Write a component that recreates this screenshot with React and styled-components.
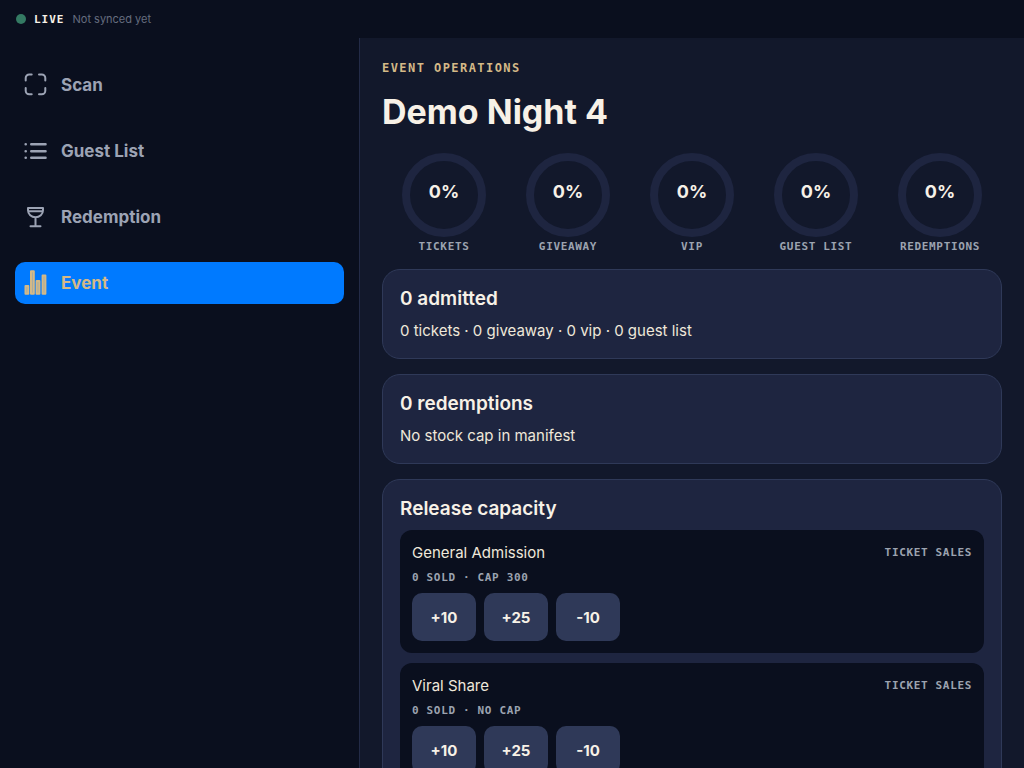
import styled, { createGlobalStyle } from "styled-components";

const rings = ["Tickets", "Giveaway", "VIP", "Guest list", "Redemptions"];

const releases = [
  { name: "General Admission", status: "0 sold · cap 300", kind: "Ticket sales" },
  { name: "Viral Share", status: "0 sold · no cap", kind: "Ticket sales" },
];

const steps = ["+10", "+25", "-10"];

function ScanIcon() {
  return (
    <NavIcon viewBox="0 0 24 24" aria-hidden="true">
      <path d="M1.700 7.500V5a3.500 3.500 0 0 1 3.500-3.500h2.500M15 1.500h2.800a3.500 3.500 0 0 1 3.500 3.500v2.500M21.300 15v2.800a3.500 3.500 0 0 1-3.500 3.500h-2.800M7.700 21.300H5.200a3.500 3.500 0 0 1-3.500-3.500V15" />
    </NavIcon>
  );
}

function ListIcon() {
  return (
    <NavIcon viewBox="0 0 24 24" aria-hidden="true">
      <path d="M7.200 5.200h14.400M7.200 12.200h14.400M7.200 18.800h14.400" strokeWidth="2.4" />
      <path d="M1.700 5.200h.01M1.700 12.200h.01M1.700 18.800h.01" strokeWidth="2.6" />
    </NavIcon>
  );
}

function GlassIcon() {
  return (
    <NavIcon viewBox="0 0 24 24" aria-hidden="true">
      <path d="M4 3h15v2.300a7.500 7 0 0 1-15 0zM4.200 6.200h14.600M11.500 12.300v8.700M6.500 21.300h10" />
    </NavIcon>
  );
}

function BarsIcon() {
  return (
    <NavIcon viewBox="0 0 24 24" aria-hidden="true">
      <path
        d="M1.500 15h2.800v7.800H1.500zM7 0.200h2.800v22.600H7zM12.600 10h2.800v12.800h-2.800zM18.600 4.400h2.800v18.400h-2.800z"
        fill="currentColor"
        fillOpacity=".75"
      />
    </NavIcon>
  );
}

const navItems = [
  { label: "Scan", Icon: ScanIcon },
  { label: "Guest List", Icon: ListIcon },
  { label: "Redemption", Icon: GlassIcon },
  { label: "Event", Icon: BarsIcon },
];

function App() {
  return (
    <>
      <GlobalStyle />
      <Shell>
        <StatusBar>
          <StatusDot />
          <StatusLabel>Live</StatusLabel>
          <SyncText>Not synced yet</SyncText>
        </StatusBar>
        <Body>
          <Sidebar>
            {navItems.map(({ label, Icon }) => (
              <NavLink
                key={label}
                href="#"
                $active={label === "Event"}
                aria-current={label === "Event" ? "page" : undefined}
              >
                <Icon />
                {label}
              </NavLink>
            ))}
          </Sidebar>
          <Main>
            <Eyebrow>Event operations</Eyebrow>
            <PageTitle>Demo Night 4</PageTitle>
            <Rings>
              {rings.map((label) => (
                <RingItem key={label}>
                  <Ring>0%</Ring>
                  <MonoLabel>{label}</MonoLabel>
                </RingItem>
              ))}
            </Rings>
            <Card>
              <CardTitle>0 admitted</CardTitle>
              <CardText>0 tickets · 0 giveaway · 0 vip · 0 guest list</CardText>
            </Card>
            <Card>
              <CardTitle>0 redemptions</CardTitle>
              <CardText>No stock cap in manifest</CardText>
            </Card>
            <Card>
              <CardTitle>Release capacity</CardTitle>
              <ReleaseList>
                {releases.map((release) => (
                  <Release key={release.name}>
                    <ReleaseHeader>
                      <ReleaseName>{release.name}</ReleaseName>
                      <MonoLabel>{release.kind}</MonoLabel>
                    </ReleaseHeader>
                    <MonoLabel>{release.status}</MonoLabel>
                    <Steps>
                      {steps.map((step) => (
                        <StepButton key={step} type="button">
                          {step}
                        </StepButton>
                      ))}
                    </Steps>
                  </Release>
                ))}
              </ReleaseList>
            </Card>
          </Main>
        </Body>
      </Shell>
    </>
  );
}

const GlobalStyle = createGlobalStyle`
  * {
    box-sizing: border-box;
  }

  body {
    margin: 0;
    background: #0a0f1e;
    color: #f7f1e7;
    font-family: Inter, "Liberation Sans", sans-serif;
  }

  h1, h2, p {
    margin: 0;
  }
`;

const Shell = styled.div`
  display: flex;
  flex-direction: column;
  height: 100vh;
`;

const StatusBar = styled.header`
  display: flex;
  align-items: center;
  gap: 8px;
  height: 38px;
  flex-shrink: 0;
  padding: 0 16px;
`;

const StatusDot = styled.span`
  width: 10px;
  height: 10px;
  border-radius: 50%;
  background: #347a63;
`;

const StatusLabel = styled.span`
  font-family: "DejaVu Sans Mono", monospace;
  font-size: 11px;
  font-weight: 700;
  letter-spacing: 1px;
  text-transform: uppercase;
`;

const SyncText = styled.span`
  font-size: 11px;
  color: #666d7e;
`;

const Body = styled.div`
  display: grid;
  grid-template-columns: 360px 1fr;
  flex: 1;
  min-height: 0;
`;

const Sidebar = styled.nav`
  display: flex;
  flex-direction: column;
  gap: 24px;
  padding: 26px 15px;
  border-right: 1px solid #232b47;
`;

const NavLink = styled.a`
  display: flex;
  align-items: center;
  gap: 13px;
  height: 42px;
  padding: 0 9px;
  border-radius: 10px;
  font-size: 17px;
  font-weight: 700;
  text-decoration: none;
  color: ${({ $active }) => ($active ? "#d4b987" : "#9ca3b4")};
  background: ${({ $active }) => ($active ? "#007aff" : "transparent")};
`;

const NavIcon = styled.svg`
  width: 24px;
  height: 24px;
  overflow: visible;
  fill: none;
  stroke: currentColor;
  stroke-width: 2;
  stroke-linecap: round;
  stroke-linejoin: round;
`;

const Main = styled.main`
  display: flex;
  flex-direction: column;
  gap: 15px;
  padding: 22px;
  background: #12182b;
  overflow-y: auto;
  scrollbar-width: none;

  > * {
    flex-shrink: 0;
  }
`;

const Eyebrow = styled.p`
  font-family: "DejaVu Sans Mono", monospace;
  font-size: 12px;
  font-weight: 700;
  line-height: 16px;
  letter-spacing: 0.12em;
  text-transform: uppercase;
  color: #d4b987;
`;

const PageTitle = styled.h1`
  margin-bottom: 5px;
  font-size: 34px;
  font-weight: 700;
  line-height: 42px;
`;

const Rings = styled.div`
  display: grid;
  grid-template-columns: repeat(5, 1fr);
`;

const RingItem = styled.div`
  display: flex;
  flex-direction: column;
  align-items: center;
  gap: 3px;
`;

const Ring = styled.div`
  display: flex;
  align-items: center;
  justify-content: center;
  width: 84px;
  height: 84px;
  padding-bottom: 8px;
  border: 8px solid #1e2540;
  border-radius: 50%;
  font-size: 18px;
  font-weight: 700;
`;

const MonoLabel = styled.span`
  font-family: "DejaVu Sans Mono", monospace;
  font-size: 11px;
  font-weight: 700;
  line-height: 14px;
  letter-spacing: 0.06em;
  text-transform: uppercase;
  color: #9ca3b0;
`;

const Card = styled.section`
  padding: 17px;
  border: 1px solid #2f3958;
  border-radius: 18px;
  background: #1e2540;
`;

const CardTitle = styled.h2`
  font-size: 19px;
  font-weight: 600;
  line-height: 23px;
`;

const CardText = styled.p`
  margin-top: 10px;
  font-size: 15px;
  line-height: 21px;
  color: #efe8da;
`;

const ReleaseList = styled.div`
  display: flex;
  flex-direction: column;
  gap: 10px;
  margin-top: 10px;
`;

const Release = styled.article`
  display: flex;
  flex-direction: column;
  padding: 12px;
  border-radius: 12px;
  background: #0a0f1e;
`;

const ReleaseHeader = styled.div`
  display: flex;
  align-items: center;
  justify-content: space-between;
  margin-bottom: 7px;
`;

const ReleaseName = styled.span`
  font-size: 15px;
  line-height: 22px;
  color: #efe8da;
`;

const Steps = styled.div`
  display: flex;
  gap: 8px;
  margin-top: 8px;
`;

const StepButton = styled.button`
  width: 64px;
  height: 48px;
  border: none;
  border-radius: 10px;
  background: #2f3958;
  color: inherit;
  font-family: inherit;
  font-size: 15px;
  font-weight: 700;
  cursor: pointer;
`;

export default App;
